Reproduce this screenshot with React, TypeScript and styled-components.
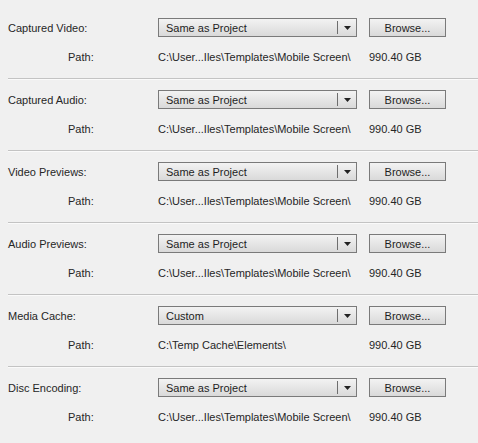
import React from "react";
import styled, { createGlobalStyle } from "styled-components";

const Global = createGlobalStyle`
  html, body { margin: 0; padding: 0; background: #f0f0f0; }
  body { font-family: "Liberation Sans", Arial, sans-serif; font-size: 11px; color: #262626; }
`;

const Page = styled.div`
  width: 478px;
  height: 443px;
  overflow: hidden;
  padding: 7px 0 0 8px;
  box-sizing: border-box;
  background: #f0f0f0;
`;

const Section = styled.section<{ $last?: boolean }>`
  padding: 11px 0 14px 0;
  border-bottom: ${(p) => (p.$last ? "none" : "1px solid #c3c3c3")};
  box-shadow: ${(p) => (p.$last ? "none" : "0 1px 0 #fafafa")};
  display: flex;
  flex-direction: column;
  gap: 13px;
`;

const ControlRow = styled.div`
  display: grid;
  grid-template-columns: 138px 199px 77px;
  column-gap: 12px;
  align-items: center;
  height: 19px;
`;

const PathRow = styled.div`
  display: grid;
  grid-template-columns: 60px 90px 211px 80px;
  align-items: center;
  height: 14px;
  line-height: 14px;
`;

const Label = styled.span`
  white-space: nowrap;
`;

const Select = styled.div`
  height: 19px;
  box-sizing: border-box;
  border: 1px solid #7a7a7a;
  background: linear-gradient(#f3f3f3, #e6e6e6 50%, #d9d9d9);
  display: flex;
  align-items: center;
`;

const SelectText = styled.span`
  flex: 1;
  padding-left: 7px;
  color: #1e1e1e;
`;

const SelectDivider = styled.span`
  width: 1px;
  height: 13px;
  background: #6e6e6e;
`;

const Arrow = styled.span`
  width: 18px;
  display: flex;
  justify-content: center;
  align-items: center;
`;

const Button = styled.div`
  height: 19px;
  box-sizing: border-box;
  border: 1px solid #7a7a7a;
  background: linear-gradient(#f3f3f3, #e6e6e6 50%, #d9d9d9);
  display: flex;
  align-items: center;
  justify-content: center;
  color: #1e1e1e;
`;

const Spacer = styled.span``;

const rows = [
  { label: "Captured Video:", value: "Same as Project", path: "C:\\User...Iles\\Templates\\Mobile Screen\\" },
  { label: "Captured Audio:", value: "Same as Project", path: "C:\\User...Iles\\Templates\\Mobile Screen\\" },
  { label: "Video Previews:", value: "Same as Project", path: "C:\\User...Iles\\Templates\\Mobile Screen\\" },
  { label: "Audio Previews:", value: "Same as Project", path: "C:\\User...Iles\\Templates\\Mobile Screen\\" },
  { label: "Media Cache:", value: "Custom", path: "C:\\Temp Cache\\Elements\\" },
  { label: "Disc Encoding:", value: "Same as Project", path: "C:\\User...Iles\\Templates\\Mobile Screen\\" },
];

export default function App() {
  return (
    <>
      <Global />
      <Page>
        {rows.map((r, i) => (
          <Section key={r.label} $last={i === rows.length - 1}>
            <ControlRow>
              <Label>{r.label}</Label>
              <Select>
                <SelectText>{r.value}</SelectText>
                <SelectDivider />
                <Arrow>
                  <svg width="7" height="4" viewBox="0 0 7 4">
                    <polygon points="0,0 7,0 3.5,4" fill="#222" />
                  </svg>
                </Arrow>
              </Select>
              <Button>Browse...</Button>
            </ControlRow>
            <PathRow>
              <Spacer />
              <Label>Path:</Label>
              <Label>{r.path}</Label>
              <Label>990.40 GB</Label>
            </PathRow>
          </Section>
        ))}
      </Page>
    </>
  );
}
